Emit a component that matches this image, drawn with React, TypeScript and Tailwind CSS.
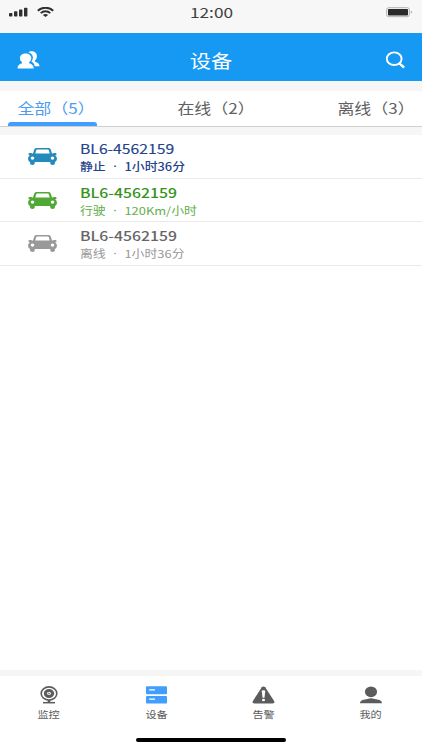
import React, { useState } from 'react';
import clsx from 'clsx';

interface Device {
  id: number;
  name: string;
  status: string;
  detail: string;
  icon: string;
  title: string;
  sub: string;
}

const devices: Device[] = [
  { id: 1, name: 'BL6-4562159', status: '静止', detail: '1小时36分', icon: 'text-[#2489bb]', title: 'text-[#24438c] scale-x-[1.21] [-webkit-text-stroke:0.15px]', sub: 'text-[#24438c] font-medium' },
  { id: 2, name: 'BL6-4562159', status: '行驶', detail: '120Km/小时', icon: 'text-[#4fa934]', title: 'text-[#35941b] font-medium scale-x-[1.215]', sub: 'text-[#5fae4b]' },
  { id: 3, name: 'BL6-4562159', status: '离线', detail: '1小时36分', icon: 'text-[#999999]', title: 'text-[#666666] font-medium scale-x-[1.215]', sub: 'text-[#999999]' },
];

const tabs = ['全部（5）', '在线（2）', '离线（3）'];

function CarIcon({ className }: { className?: string }) {
  return (
    <svg className={className} width="29" height="17" viewBox="0 0 29 17" fill="currentColor">
      <path
        fillRule="evenodd"
        d="M9 0h11c1.600 0 2.500.6 2.900 1.900l1.200 3.900c.4-.5 1.200-.8 2.300-.8 1.500 0 2.200.5 2.200 1.200 0 .6-.6 1-1.600 1.100 1.300.8 1.900 1.900 1.900 3.400 0 1.700-.7 2.800-2 3.200v1.400c0 1.100-.9 1.700-2.300 1.700s-2.300-.6-2.300-1.700V14H6.700v1.300c0 1.100-.9 1.700-2.300 1.700s-2.300-.6-2.300-1.700v-1.400C.8 13.500.1 12.400.1 10.700c0-1.500.6-2.600 1.900-3.400C1 7.200.4 6.800.4 6.200.4 5.500 1.100 5 2.600 5c1.100 0 1.900.3 2.300.8l1.200-3.900C6.500.6 7.400 0 9 0ZM9.500 1.500c-.8 0-1.200.3-1.400 1L7.300 5.600h14.400l-.8-3.100c-.2-.7-.6-1-1.400-1ZM4.500 8.500a1.800 1.600 0 1 0 0 3.200 1.800 1.600 0 1 0 0-3.200Zm20 0a1.800 1.600 0 1 0 0 3.200 1.800 1.600 0 1 0 0-3.200Z"
      />
    </svg>
  );
}

function StatusBar() {
  return (
    <div className="flex h-[33px] items-start justify-between bg-[#f7f7f7] text-[#303030]">
      <div className="flex w-[140px] items-center gap-[9px] pt-[7px] pl-[9px]">
        <svg width="19" height="10" viewBox="0 0 19 10" fill="currentColor">
          <rect x="0" y="6" width="3.400" height="3.500" rx=".7" />
          <rect x="5" y="4.300" width="3.400" height="5.200" rx=".7" />
          <rect x="10" y="2.500" width="3.400" height="7" rx=".7" />
          <rect x="15" y=".8" width="3.400" height="8.700" rx=".7" />
        </svg>
        <svg width="17" height="10" viewBox="0 0 17 10" fill="none" stroke="currentColor" strokeWidth="1.900">
          <path d="M.8 3.700C5-.3 12-.3 16.200 3.700" />
          <path d="M3.700 6.100c2.700-2.400 6.900-2.400 9.600 0" />
          <path d="M5.900 8c1.500-1.300 3.700-1.300 5.200 0L8.500 10Z" fill="currentColor" stroke="none" />
        </svg>
      </div>
      <span className="mt-[2px] scale-x-[1.23] text-[14px] leading-5 text-[#404040]">12:00</span>
      <div className="flex w-[140px] justify-end pt-[7px] pr-[9px]">
        <svg width="27" height="11" viewBox="0 0 27 11">
          <rect x=".7" y=".7" width="22.600" height="9" rx="2" fill="none" stroke="#b0b0b0" strokeWidth="1" />
          <rect x="2" y="2" width="20" height="6.500" rx=".8" fill="#2a2a2a" />
          <path d="M24.800 3.800c1.400.4 1.400 2.400 0 2.800Z" fill="#999" />
        </svg>
      </div>
    </div>
  );
}

function Header() {
  return (
    <header className="flex h-12 items-center justify-between bg-[#1599f3] pt-[6px] pr-[15px] pl-[17px] text-white">
      <button className="flex w-8">
        <svg width="23" height="18" viewBox="0 0 23 18" fill="currentColor">
          <path d="M14.500.3c3.200 0 5.400 1.900 5.400 4.700 0 2-.8 3.500-1.900 4.500-.3.700 0 1.100.8 1.400 2.400.8 3.600 1.900 3.700 4.300h-4.800c-.4-2.500-1.600-3.800-3.400-4.600 1.100-1.300 1.600-2.700 1.600-4.200 0-2.600-1.900-4.500-4.700-5.200.8-.6 1.900-.9 3.300-.9Z" />
          <path d="M8.600 2.500c3.300 0 5.700 1.800 5.700 4.600 0 1.800-.8 3.200-2.100 4.100-.3.700.1 1.100.9 1.400 2.100.8 3.500 2 3.700 4.800H.5c.1-2.800 1.500-4 3.700-4.800.8-.3 1.100-.7.800-1.400-1.300-.9-2.100-2.300-2.100-4.100 0-2.800 2.400-4.600 5.700-4.600Z" />
        </svg>
      </button>
      <h1 className="-mt-px -ml-[3px] scale-x-[1.18] text-[18px] leading-6">设备</h1>
      <button className="flex w-8 justify-end">
        <svg width="23" height="19" viewBox="0 0 23 19" fill="none" stroke="currentColor">
          <ellipse cx="10.200" cy="7.700" rx="7.400" ry="6.300" strokeWidth="1.900" />
          <path d="m15.300 12.300 4.800 4.200" strokeWidth="2.400" />
        </svg>
      </button>
    </header>
  );
}

const navItems = [
  {
    label: '监控',
    icon: (
      <svg width="18" height="18" viewBox="0 0 18 18" fill="none" stroke="currentColor">
        <ellipse cx="9" cy="7.500" rx="7.800" ry="6.600" strokeWidth="1.600" />
        <ellipse cx="9" cy="7.500" rx="3.600" ry="3" strokeWidth="3.200" />
        <circle cx="9" cy="7.500" r=".8" fill="currentColor" stroke="none" />
        <path d="M9 14v3" strokeWidth="2.600" />
        <path d="M3 16.700h12" strokeWidth="1.500" />
      </svg>
    ),
  },
  {
    label: '设备',
    icon: (
      <svg width="21" height="18" viewBox="0 0 21 18">
        <rect x="0" y=".3" width="21" height="7.900" rx="1" fill="#409eff" />
        <rect x="0" y="9.900" width="21" height="7.500" rx="1" fill="#409eff" />
        <path d="M3.200 3.800h5.800M3.200 13.100h5.800" stroke="#fff" strokeWidth="1.200" />
      </svg>
    ),
  },
  {
    label: '告警',
    icon: (
      <svg width="23" height="18" viewBox="0 0 23 18">
        <path d="M9.800 1.300c.9-1.100 2.500-1.100 3.400 0l8.900 13.600c.9 1.500.2 2.600-1.600 2.600h-18c-1.800 0-2.500-1.100-1.600-2.600Z" fill="currentColor" />
        <path d="M9.800 5.300c0-.7.700-1.100 1.700-1.100s1.700.4 1.700 1.100l-.7 6.500h-2Z" fill="#fff" />
        <ellipse cx="11.500" cy="14" rx="1.500" ry="1.300" fill="#fff" />
      </svg>
    ),
  },
  {
    label: '我的',
    icon: (
      <svg width="22" height="18" viewBox="0 0 22 18" fill="currentColor">
        <ellipse cx="11" cy="5.800" rx="6.100" ry="5.400" />
        <path d="M0 17.300c0-2.500 2.500-3.400 6-4 1.800-.3 2.700-1.100 5-1.100s3.200.8 5 1.100c3.500.6 6 1.500 6 4Z" />
      </svg>
    ),
  },
];

export default function App() {
  const [activeTab, setActiveTab] = useState(0);

  return (
    <div className="flex h-[750px] w-[422px] flex-col overflow-hidden bg-[#f6f6f6] font-['Noto_Sans_CJK_SC',sans-serif]">
      <StatusBar />
      <Header />

      <div className="mt-[10px] flex h-[36px] justify-between border-b border-[#cfcfcf] bg-white pr-[5px] pl-2">
        {tabs.map((tab, i) => (
          <button
            key={tab}
            onClick={() => setActiveTab(i)}
            className={clsx('flex w-[89px] flex-col items-center justify-between', activeTab === i ? 'text-[#4b9cf0]' : 'text-[#606060]')}
          >
            <span className="mt-[6px] ml-[8px] scale-x-[1.17] text-[14.500px] leading-[22px] whitespace-nowrap">{tab}</span>
            {activeTab === i && <span className="h-[4px] w-full rounded-t-[3px] bg-[#409eff]" />}
          </button>
        ))}
      </div>

      <main className="mt-2 flex-1 bg-white">
        {devices.map((d) => (
          <div key={d.id} className="flex h-[43.500px] border-b border-[#e9e9e9] pl-7">
            <CarIcon className={clsx('mt-[13px]', d.icon)} />
            <div className="ml-[23px] flex flex-col items-start">
              <span className={clsx('mt-[5px] origin-left text-[13px] leading-[18px]', d.title)}>{d.name}</span>
              <span className={clsx('flex origin-left scale-x-[1.17] text-[11px] leading-4 whitespace-nowrap', d.sub)}>
                <span>{d.status}</span>
                <span className="w-[16px] text-center font-['Noto_Sans']">·</span>
                <span>{d.detail}</span>
              </span>
            </div>
          </div>
        ))}
      </main>

      <nav className="mt-[6px] h-[74px] bg-white text-[#5c5c5c]">
        <div className="flex h-[62px] justify-between pr-[24px] pl-[22px]">
          {navItems.map((item) => (
            <button key={item.label} className="flex w-[54px] flex-col items-center pt-[10px]">
              {item.icon}
              <span className="mt-[3px] scale-x-[1.17] text-[9.500px] leading-[14px]">{item.label}</span>
            </button>
          ))}
        </div>
        <div className="mx-auto h-[4px] w-[150px] rounded-full bg-black" />
      </nav>
    </div>
  );
}
